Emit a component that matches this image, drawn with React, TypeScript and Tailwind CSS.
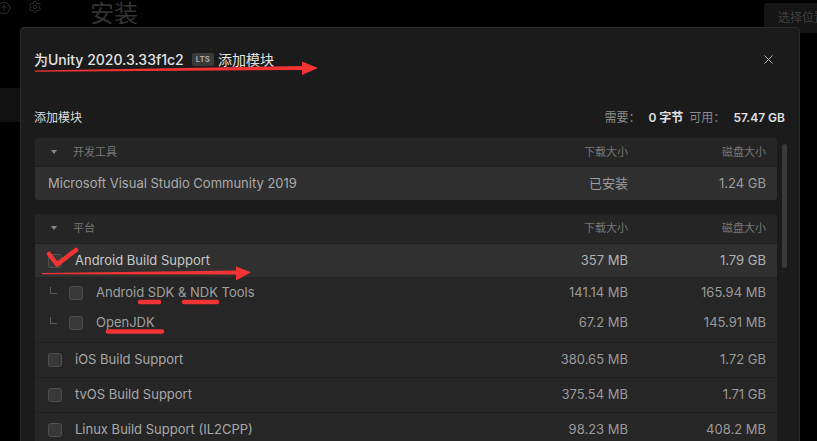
import { Settings, CircleArrowUp, X } from "lucide-react";

const font = { fontFamily: '"Inter", "Noto Sans CJK SC", sans-serif' };

type Mod = { name: string; dl: string; disk: string; sub?: boolean; checked?: boolean; active?: boolean };

const platform: Mod[] = [
  { name: "Android Build Support", dl: "357 MB", disk: "1.79 GB", active: true, checked: true },
  { name: "Android SDK & NDK Tools", dl: "141.14 MB", disk: "165.94 MB", sub: true },
  { name: "OpenJDK", dl: "67.2 MB", disk: "145.91 MB", sub: true },
  { name: "iOS Build Support", dl: "380.65 MB", disk: "1.72 GB" },
  { name: "tvOS Build Support", dl: "375.54 MB", disk: "1.71 GB" },
  { name: "Linux Build Support (IL2CPP)", dl: "98.23 MB", disk: "408.2 MB" },
];

const Checkbox = () => (
  <span className="block h-[14px] w-[14px] shrink-0 rounded-[3px] border border-[#4f4f4f] bg-[#383838]" />
);

const GroupHeader = ({ label }: { label: string }) => (
  <div className="flex h-[28px] items-center rounded-t-[3px] bg-[#252525] pr-[11px] text-[11px] text-[#777]">
    <span className="ml-[16px] h-0 w-0 border-x-[3px] border-t-[4px] border-x-transparent border-t-[#888]" />
    <span className="ml-[16px]">{label}</span>
    <span className="flex-1 text-right">下载大小</span>
    <span className="w-[138px] text-right">磁盘大小</span>
  </div>
);

const Row = ({ m }: { m: Mod }) => {
  if (m.sub) {
    return (
      <div className="flex h-[30px] items-center pr-[11px] text-[13px] text-[#a0a0a0]">
        <span className="ml-[15px] mb-[6px] h-[7px] w-[7px] border-b border-l border-[#5a5a5a]" />
        <span className="ml-[12px]"><Checkbox /></span>
        <span className="ml-[13px]">{m.name}</span>
        <span className="flex-1 text-right text-[#9a9a9a]">{m.dl}</span>
        <span className="w-[138px] text-right text-[#9a9a9a]">{m.disk}</span>
      </div>
    );
  }
  return (
    <div
      className={
        "flex items-center border-t border-[#1e1e1e] pr-[11px] text-[13px] " +
        (m.active ? "h-[34px] bg-[#303030] text-[#c8c8c8]" : "h-[35px] bg-[#262626] text-[#a8a8a8]")
      }
    >
      <span className="ml-[13px]"><Checkbox /></span>
      <span className="ml-[13px]">{m.name}</span>
      <span className={"flex-1 text-right " + (m.active ? "text-[#b0b0b0]" : "text-[#9a9a9a]")}>{m.dl}</span>
      <span className={"w-[138px] text-right " + (m.active ? "text-[#b0b0b0]" : "text-[#9a9a9a]")}>{m.disk}</span>
    </div>
  );
};

export default function App() {
  const mods = platform.filter((m) => !m.sub);
  return (
    <div className="relative h-[441px] w-full overflow-hidden bg-black" style={font}>
      {/* background app */}
      <div className="flex h-[88px] items-start">
        <CircleArrowUp className="-ml-[3px] mt-[1px] text-[#333]" size={14} strokeWidth={1.5} />
        <Settings className="ml-[17px] mt-[0px] text-[#333]" size={14} strokeWidth={1.5} />
        <span className="ml-[48px] mt-[-2px] text-[24px] leading-[32px] text-[#333]">安装</span>
        <div className="ml-auto mt-[3px] flex h-[30px] w-[53px] items-center overflow-hidden rounded-l-[3px] bg-[#151515] pl-[14px] text-[12px] text-[#404040] whitespace-nowrap">
          选择位置
        </div>
      </div>
      <div className="h-[34px] w-[20px] bg-[#101010]" />

      {/* modal */}
      <div className="absolute left-[20px] top-[27px] bottom-[-20px] w-[780px] rounded-t-[4px] border border-[#2a2a2a] bg-[#1b1b1b]">
        <div className="mt-[20px] flex h-[22px] items-center pl-[13px] pr-[23px]">
          <span className="text-[14px] font-medium text-[#e2e2e2]">为Unity 2020.3.33f1c2</span>
          <span className="ml-[8px] rounded-[2px] bg-[#3a3a3a] px-[4px] text-[8px] font-semibold leading-[13px] text-[#aaa]">LTS</span>
          <span className="ml-[4px] text-[14px] text-[#e2e2e2]">添加模块</span>
          <X className="ml-auto text-[#b5b5b5]" size={15} strokeWidth={1.6} />
        </div>

        <div className="mt-[38px] flex h-[20px] items-center pl-[13px] pr-[14px] text-[12px]">
          <span className="text-[#dcdcdc]">添加模块</span>
          <span className="ml-auto text-[#8a8a8a]">需要：</span>
          <span className="ml-[8px] font-semibold text-[#e0e0e0]">0 字节</span>
          <span className="ml-[6px] text-[#8a8a8a]">可用：</span>
          <span className="ml-[8px] font-semibold text-[#e0e0e0]">57.47 GB</span>
        </div>

        <div className="mt-[10px] flex pl-[14px]">
          <div className="w-[742px]">
            <div className="overflow-hidden rounded-[3px]">
              <GroupHeader label="开发工具" />
              <div className="flex h-[34px] items-center border-t border-[#1e1e1e] bg-[#2f2f2f] pr-[11px] text-[13px] text-[#ababab]">
                <span className="ml-[13px]">Microsoft Visual Studio Community 2019</span>
                <span className="flex-1 text-right text-[#9d9d9d]">已安装</span>
                <span className="w-[138px] text-right text-[#9d9d9d]">1.24 GB</span>
              </div>
            </div>

            <div className="mt-[14px] overflow-hidden rounded-t-[3px]">
              <div className="pb-[1px] bg-[#252525]">
                <GroupHeader label="平台" />
              </div>
              <Row m={mods[0]} />
              <div className="bg-[#262626] pb-[4px] pt-[1px]">
                <Row m={platform[1]} />
                <Row m={platform[2]} />
              </div>
              {mods.slice(1).map((m) => (
                <Row key={m.name} m={m} />
              ))}
            </div>
          </div>
          <div className="ml-[5px] mt-[6px] h-[124px] w-[5px] rounded-full bg-[#3a3a3a]" />
        </div>
      </div>

      {/* red annotations */}
      <svg className="pointer-events-none absolute left-0 top-0" width="817" height="441" viewBox="0 0 817 441">
        <g fill="#f23333" stroke="none">
          <polygon points="35,70.5 304,66 304,70 35,71.8" />
          <polygon points="302,61.5 318,68 302,75" />
          <polygon points="42,273 238,270.5 238,274.5 42,274.2" />
          <polygon points="236,266.5 251,272.3 236,280.5" />
        </g>
        <g fill="none" stroke="#f23333" strokeLinecap="round" strokeLinejoin="round">
          <polyline points="49,254 57,264.5 76,250" strokeWidth="4.5" />
          <line x1="140" y1="302" x2="159" y2="302" strokeWidth="4.5" />
          <line x1="184" y1="302" x2="217" y2="302" strokeWidth="4.5" />
          <line x1="108" y1="331.5" x2="162" y2="331.5" strokeWidth="4.5" />
        </g>
      </svg>
    </div>
  );
}
